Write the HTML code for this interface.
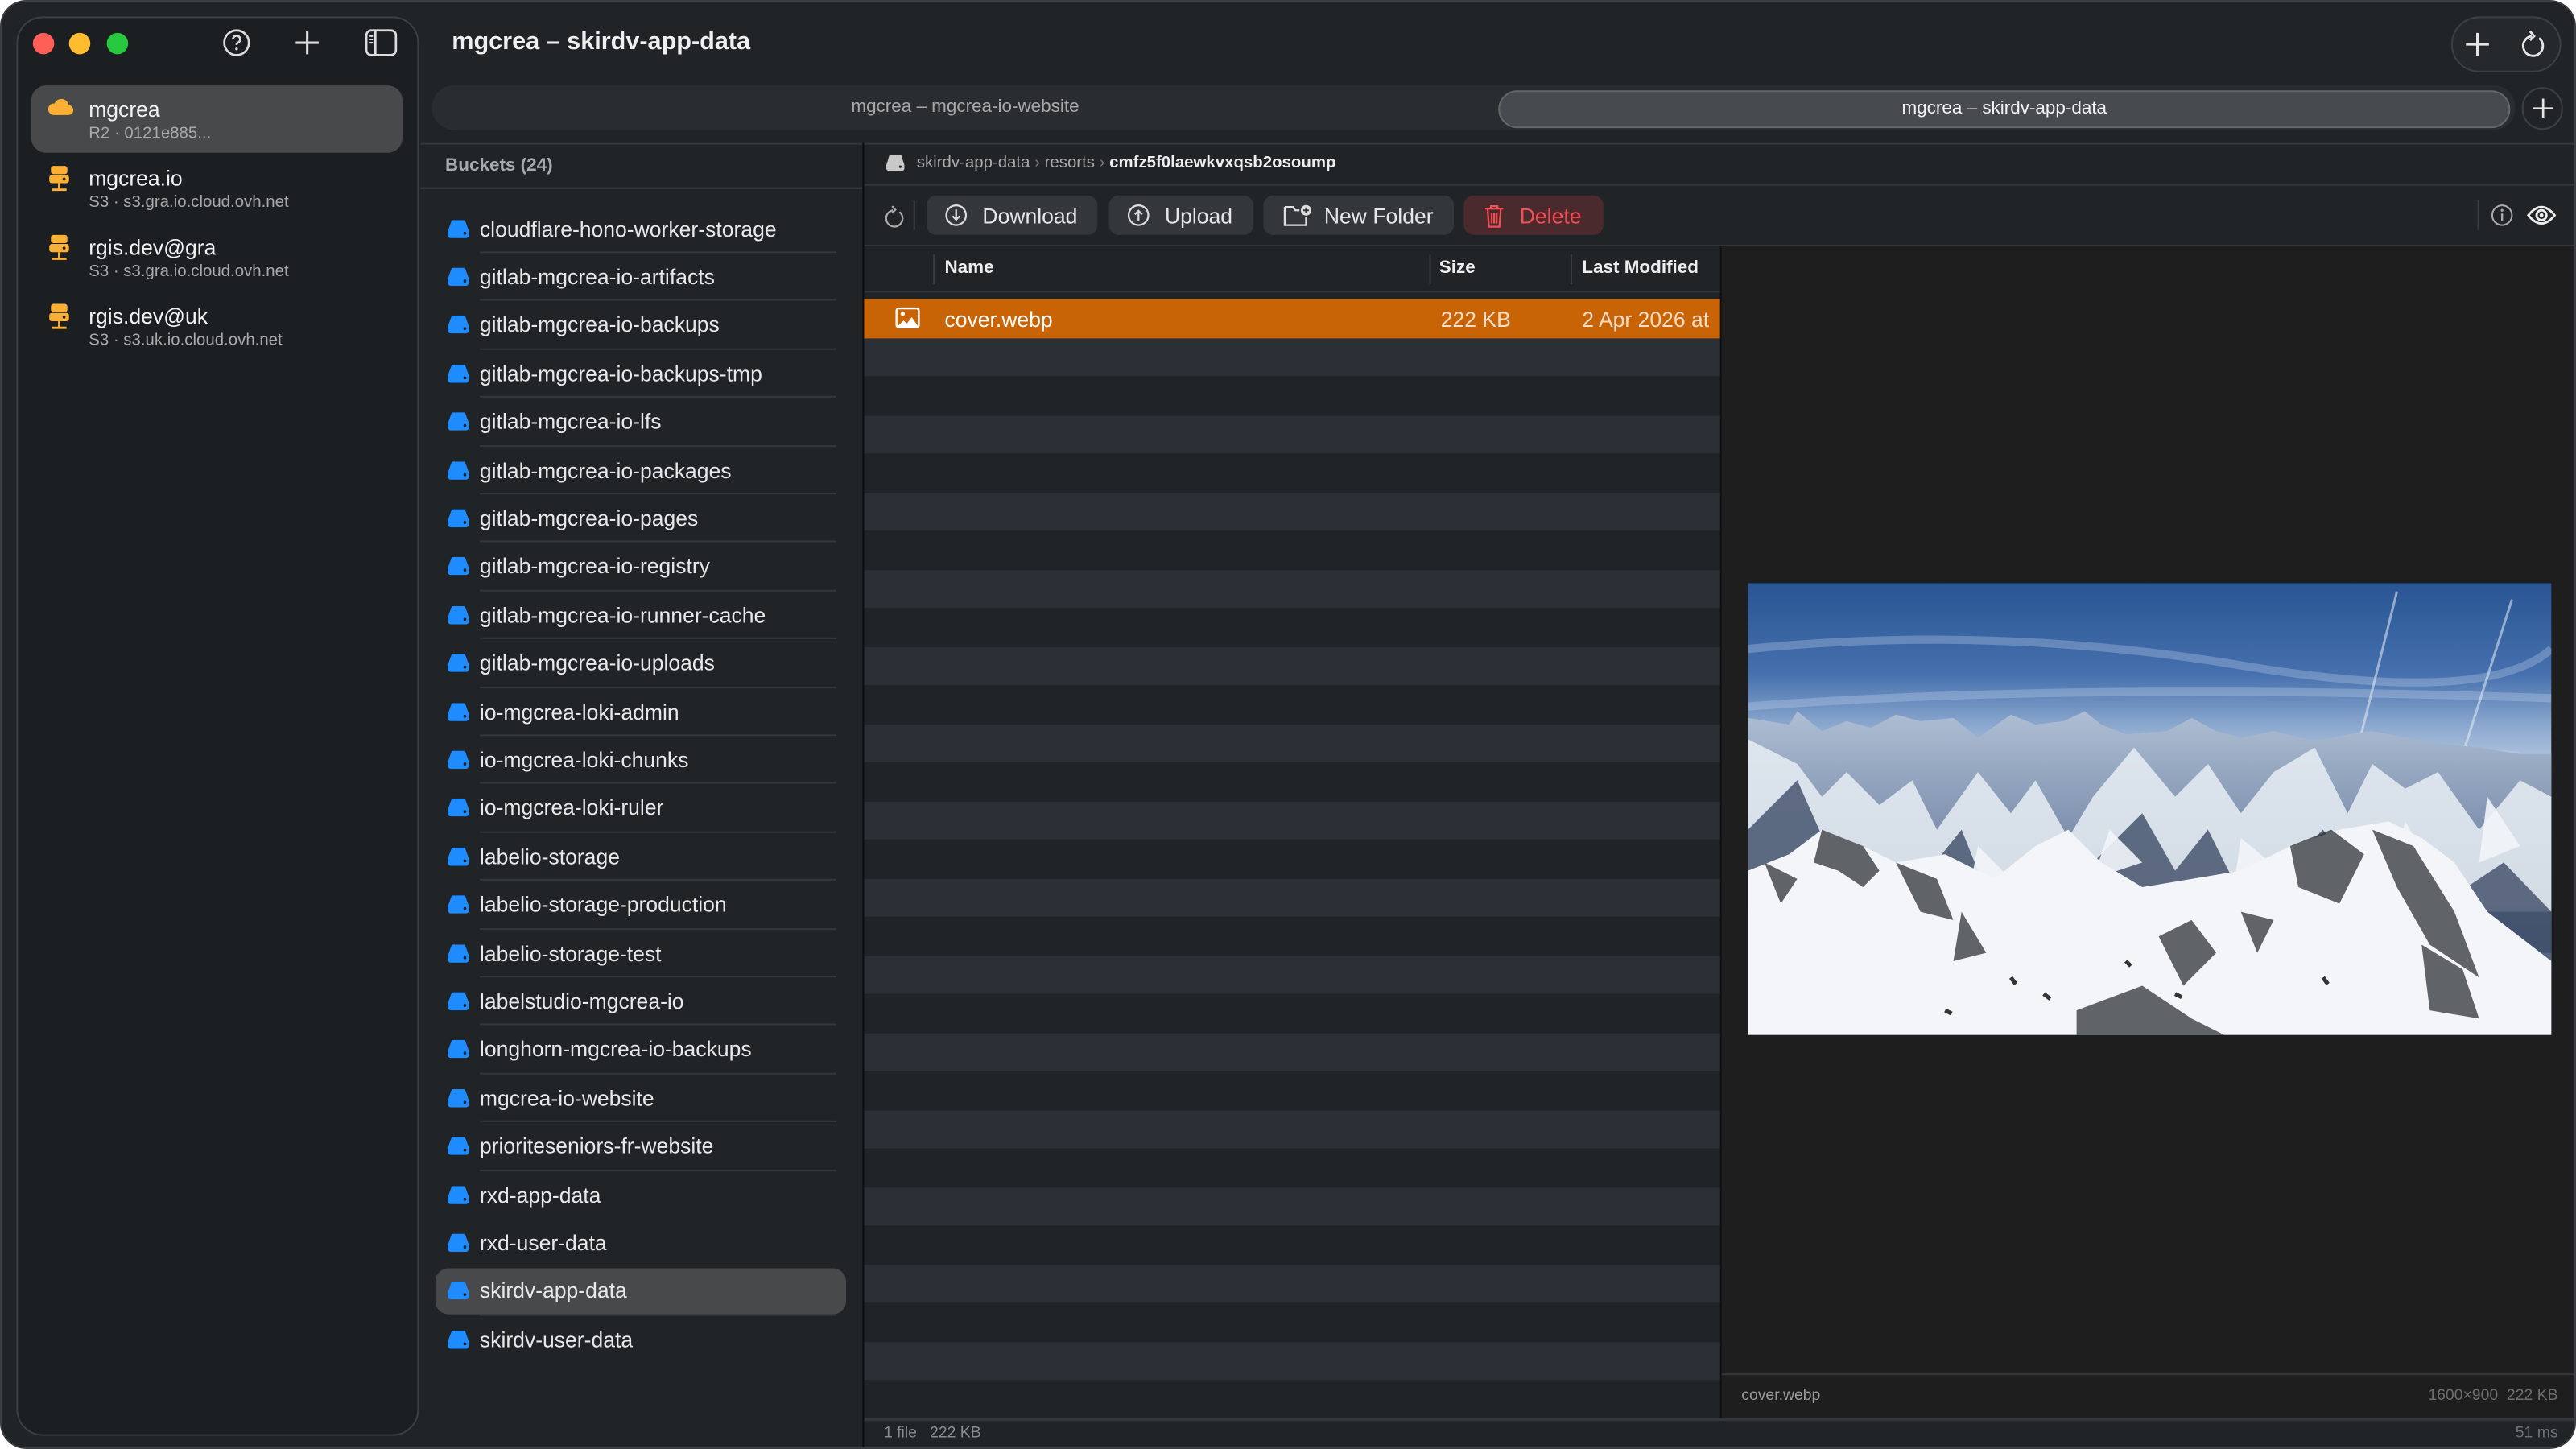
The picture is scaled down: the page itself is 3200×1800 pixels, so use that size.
<!DOCTYPE html>
<html><head><meta charset="utf-8">
<style>
*{box-sizing:border-box;margin:0;padding:0}
html,body{width:3200px;height:1800px;overflow:hidden;background:#fff}
#s{position:absolute;left:0;top:0;width:1568px;height:882px;transform:scale(2.040816);transform-origin:0 0;font-family:"Liberation Sans",sans-serif;color:#e6e6e6}
.win{position:absolute;left:0;top:0;width:1568px;height:882px;background:#202427;border-radius:16px;overflow:hidden;border:1px solid #3a3d41}
.abs{position:absolute}
.side{left:9px;top:9px;width:245px;height:864px;background:#1c1f22;border:1px solid #3b3e42;border-radius:16px}
.dot{position:absolute;width:13px;height:13px;border-radius:50%;top:19px}
.acc{position:absolute;left:18px;width:226px;height:41px}
.acc .n{position:absolute;left:35px;top:7px;font-size:13px;color:#f2f2f2}
.acc .d{position:absolute;left:35px;top:24px;font-size:10px;color:#a8a8a8}
.acc svg{position:absolute;left:10px;top:6px}
.bk{position:absolute;left:264px;width:250px;height:28px;font-size:13px;color:#e8e8e8}
.bk span{position:absolute;left:27px;top:7px}
.bk svg{position:absolute;left:7px;top:9px}
.sep{position:absolute;left:291px;width:217px;height:1px;background:#34373b}
.btn{position:absolute;top:118px;height:24px;background:#33373c;border-radius:6px;font-size:13px;color:#e6e6e6}
.btn span{position:absolute;top:5px}
.btn svg{position:absolute;top:5px}
.row{position:absolute;left:525px;width:521px;height:23.5px}
.hl{position:absolute;height:1px;background:#3a3e43}
</style></head><body><div id="s">
<div class="win">
 <div class="abs side"></div>
 <div class="dot" style="left:19px;background:#fe5f57"></div>
 <div class="dot" style="left:41px;background:#febc2e"></div>
 <div class="dot" style="left:64px;background:#28c840"></div>
 <svg class="abs" style="left:134px;top:16px" width="18" height="18" viewBox="0 0 18 18"><circle cx="9" cy="9" r="7.5" fill="none" stroke="#ddd" stroke-width="1.3"/><path d="M6.8 7a2.2 2.2 0 1 1 3 2c-.6.3-.8.7-.8 1.4" fill="none" stroke="#ddd" stroke-width="1.3"/><circle cx="9" cy="12.8" r=".8" fill="#ddd"/></svg>
 <svg class="abs" style="left:178px;top:17px" width="16" height="16"><path d="M8 1v14M1 8h14" stroke="#ddd" stroke-width="1.5"/></svg>
 <svg class="abs" style="left:221px;top:16px" width="20" height="18"><rect x="1" y="1.5" width="18" height="15" rx="3" fill="none" stroke="#ddd" stroke-width="1.3"/><path d="M6.5 2v14" stroke="#ddd" stroke-width="1.3"/><path d="M3 5h2M3 7h2M3 9h2" stroke="#ddd" stroke-width="1"/></svg>

 <div class="acc" style="top:51px;background:#48494b;border-radius:9px">
  <svg width="16" height="14" viewBox="0 0 16 14"><path d="M3.5 12h9a3 3 0 0 0 .3-6A4.5 4.5 0 0 0 4.2 5 3.5 3.5 0 0 0 3.5 12z" fill="#fbb035"/></svg>
  <div class="n">mgcrea</div><div class="d">R2 · 0121e885...</div></div>
 <div class="acc" style="top:93px"><svg width="14" height="18" viewBox="0 0 14 18"><rect x="2" y="1" width="10" height="5" rx="1.5" fill="#fbb035"/><rect x="1" y="6.5" width="12" height="5" rx="1.5" fill="#fbb035"/><circle cx="10" cy="9" r=".9" fill="#1c1f22"/><path d="M7 11.5v4M2.5 15.5h9" stroke="#fbb035" stroke-width="1.4"/></svg><div class="n">mgcrea.io</div><div class="d">S3 · s3.gra.io.cloud.ovh.net</div></div>
 <div class="acc" style="top:135px"><svg width="14" height="18" viewBox="0 0 14 18"><rect x="2" y="1" width="10" height="5" rx="1.5" fill="#fbb035"/><rect x="1" y="6.5" width="12" height="5" rx="1.5" fill="#fbb035"/><circle cx="10" cy="9" r=".9" fill="#1c1f22"/><path d="M7 11.5v4M2.5 15.5h9" stroke="#fbb035" stroke-width="1.4"/></svg><div class="n">rgis.dev@gra</div><div class="d">S3 · s3.gra.io.cloud.ovh.net</div></div>
 <div class="acc" style="top:177px"><svg width="14" height="18" viewBox="0 0 14 18"><rect x="2" y="1" width="10" height="5" rx="1.5" fill="#fbb035"/><rect x="1" y="6.5" width="12" height="5" rx="1.5" fill="#fbb035"/><circle cx="10" cy="9" r=".9" fill="#1c1f22"/><path d="M7 11.5v4M2.5 15.5h9" stroke="#fbb035" stroke-width="1.4"/></svg><div class="n">rgis.dev@uk</div><div class="d">S3 · s3.uk.io.cloud.ovh.net</div></div>

 <div class="abs" style="left:274px;top:16px;font-size:15px;font-weight:bold;color:#f0f0f0">mgcrea – skirdv-app-data</div>
 <div class="abs" style="left:1491px;top:9px;width:67px;height:34px;border:1px solid #3c4044;border-radius:17px;background:#25292c"></div>
 <svg class="abs" style="left:1499px;top:18px" width="16" height="16"><path d="M8 1v14M1 8h14" stroke="#e6e6e6" stroke-width="1.5"/></svg>
 <svg class="abs" style="left:1532px;top:16px" width="18" height="20" viewBox="0 0 18 20"><path d="M12.5 6.2A6 6 0 1 1 8 5" fill="none" stroke="#e6e6e6" stroke-width="1.4"/><path d="M7 2l2.5 3L7 7.5" fill="none" stroke="#e6e6e6" stroke-width="1.4"/></svg>

 <div class="abs" style="left:262px;top:51px;width:1268px;height:27px;background:#2a2d30;border-radius:13px"></div>
 <div class="abs" style="left:262px;top:58px;width:649px;text-align:center;font-size:11px;color:#a8a8a8">mgcrea – mgcrea-io-website</div>
 <div class="abs" style="left:911px;top:54px;width:616px;height:23px;background:#474a4e;border:1px solid #64676b;border-radius:12px;text-align:center;font-size:11px;line-height:21px;color:#f2f2f2">mgcrea – skirdv-app-data</div>
 <div class="abs" style="left:1534px;top:52px;width:25px;height:26px;border:1px solid #3c4044;border-radius:13px"></div>
 <svg class="abs" style="left:1541px;top:59px" width="12" height="12"><path d="M6 0v12M0 6h12" stroke="#e6e6e6" stroke-width="1.3"/></svg>
 <div class="hl" style="left:255px;top:86px;width:1313px;background:#34383c"></div>

 <div class="abs" style="left:270px;top:94px;font-size:11px;font-weight:bold;color:#a8abae">Buckets (24)</div>
 <div class="hl" style="left:255px;top:113px;width:269px;background:#3c4045"></div>
 <div class="bk" style="top:771px;background:#48494b;border-radius:8px"></div>
 <div id="bl"></div>
 <div class="abs" style="left:524px;top:86px;width:1px;height:796px;background:#0b0c0d"></div>

 <svg class="abs" style="left:538px;top:93px" width="12" height="10" viewBox="0 0 12 10"><path d="M2.5 0h7l1.5 5H1z" fill="#c8c8c8"/><rect x="0.5" y="5" width="11" height="5" rx="1.5" fill="#c8c8c8"/><circle cx="9" cy="7.5" r=".8" fill="#202427"/></svg>
 <div class="abs" style="left:557px;top:93px;font-size:10px;color:#aaa">skirdv-app-data <span style="color:#777">›</span> resorts <span style="color:#777">›</span> <span style="color:#eee;font-weight:bold">cmfz5f0laewkvxqsb2osoump</span></div>
 <div class="hl" style="left:525px;top:111px;width:1043px;background:#34383c"></div>

 <svg class="abs" style="left:536px;top:123px" width="14" height="16" viewBox="0 0 14 16"><path d="M10.5 5A5 5 0 1 1 6.5 4" fill="none" stroke="#aaa" stroke-width="1.1"/><path d="M6 1.5l2 2.2-2 2" fill="none" stroke="#aaa" stroke-width="1.1"/></svg>
 <div class="abs" style="left:555px;top:121px;width:1px;height:18px;background:#3a3d41"></div>
 <div class="btn" style="left:563px;width:104px"><svg style="left:11px" width="14" height="14"><circle cx="7" cy="7" r="6" fill="none" stroke="#ddd" stroke-width="1.1"/><path d="M7 3.5v6M4.8 7.5L7 9.7l2.2-2.2" fill="none" stroke="#ddd" stroke-width="1.1"/></svg><span style="left:34px">Download</span></div>
 <div class="btn" style="left:674px;width:88px"><svg style="left:11px" width="14" height="14"><circle cx="7" cy="7" r="6" fill="none" stroke="#ddd" stroke-width="1.1"/><path d="M7 10.5v-6M4.8 6.5L7 4.3l2.2 2.2" fill="none" stroke="#ddd" stroke-width="1.1"/></svg><span style="left:34px">Upload</span></div>
 <div class="btn" style="left:768px;width:116px"><svg style="left:12px" width="18" height="14" viewBox="0 0 18 14"><path d="M1 2h5l1.5 2H10M1 2v11h13V8" fill="none" stroke="#ddd" stroke-width="1.1"/><circle cx="14" cy="4" r="3.2" fill="#ddd"/><path d="M14 2.3v3.4M12.3 4h3.4" stroke="#33373c" stroke-width="1"/></svg><span style="left:37px">New Folder</span></div>
 <div class="btn" style="left:890px;width:85px;background:#4b2a2e"><svg style="left:12px" width="13" height="15" viewBox="0 0 13 15"><path d="M1 3h11M4.5 3V1.5h4V3M2.5 3l.8 11h6.4l.8-11M5 5.5v6.5M6.5 5.5v6.5M8 5.5v6.5" fill="none" stroke="#ef4f55" stroke-width="1.1"/></svg><span style="left:34px;color:#ef4f55">Delete</span></div>
 <div class="abs" style="left:1507px;top:121px;width:1px;height:18px;background:#3a3d41"></div>
 <svg class="abs" style="left:1515px;top:123px" width="14" height="14"><circle cx="7" cy="7" r="6" fill="none" stroke="#aaa" stroke-width="1"/><path d="M7 6v4.5" stroke="#aaa" stroke-width="1.2"/><circle cx="7" cy="4" r=".8" fill="#aaa"/></svg>
 <svg class="abs" style="left:1537px;top:123px" width="18" height="14" viewBox="0 0 18 14"><path d="M1 7Q9 -3 17 7Q9 17 1 7z" fill="none" stroke="#eee" stroke-width="1.4"/><circle cx="9" cy="7" r="3" fill="none" stroke="#eee" stroke-width="1.4"/><circle cx="9" cy="7" r="1.2" fill="#eee"/></svg>
 <div class="hl" style="left:525px;top:148px;width:1043px;background:#34383c"></div>

 <div class="abs" style="left:525px;top:149px;width:521px;height:713px;background:#202427"></div>
 <div class="abs" style="left:567px;top:154px;width:1px;height:18px;background:#3a3e43"></div>
 <div class="abs" style="left:869px;top:154px;width:1px;height:18px;background:#3a3e43"></div>
 <div class="abs" style="left:955px;top:154px;width:1px;height:18px;background:#3a3e43"></div>
 <div class="abs" style="left:574px;top:156px;font-size:11px;font-weight:bold;color:#eee">Name</div>
 <div class="abs" style="left:875px;top:156px;font-size:11px;font-weight:bold;color:#eee">Size</div>
 <div class="abs" style="left:962px;top:156px;font-size:11px;font-weight:bold;color:#eee">Last Modified</div>
 <div class="hl" style="left:525px;top:176px;width:521px;background:#34383c"></div>
 <div id="rows"></div>
 <div class="row" style="top:181px;background:#c86406;overflow:hidden">
  <svg class="abs" style="left:19px;top:5px" width="15" height="13" viewBox="0 0 15 13"><rect x=".7" y=".7" width="13.6" height="11.6" rx="1.5" fill="none" stroke="#fff" stroke-width="1.2"/><circle cx="4.5" cy="4" r="1.3" fill="#fff"/><path d="M1 12l4-4 2 2 3-4 4 6z" fill="#fff"/></svg>
  <div class="abs" style="left:49px;top:5px;font-size:13px;color:#fff">cover.webp</div>
  <div class="abs" style="left:351px;top:5px;font-size:13px;color:#f6dcc6">222 KB</div>
  <div class="abs" style="left:437px;top:5px;font-size:13px;color:#f6dcc6;white-space:nowrap">2 Apr 2026 at</div>
 </div>
 <div class="abs" style="left:1046px;top:149px;width:1px;height:713px;background:#0e0f10"></div>

 <div class="abs" style="left:1047px;top:149px;width:521px;height:713px;background:#1e1e1e"></div>
 <svg class="abs" style="left:1063px;top:354px" width="489" height="275" viewBox="0 0 489 275">
  <defs><linearGradient id="sk" x1="0" y1="0" x2="0" y2="1"><stop offset="0" stop-color="#2a5594"/><stop offset=".2" stop-color="#4570ad"/><stop offset=".32" stop-color="#8eaad0"/><stop offset=".4" stop-color="#b3c6df"/></linearGradient>
  <linearGradient id="mt" x1="0" y1="0" x2="0" y2="1"><stop offset="0" stop-color="#aebfd4"/><stop offset=".5" stop-color="#6d80a0"/><stop offset="1" stop-color="#3a4a66"/></linearGradient></defs>
  <rect width="489" height="275" fill="url(#sk)"/>
  <path d="M0 40Q150 25 300 50T489 40M0 75Q200 60 489 70M30 100Q250 90 470 105" stroke="#c9d8ee" stroke-width="5" opacity=".3" fill="none"/>
  <path d="M395 5L370 105M465 10L430 120" stroke="#e6eef8" stroke-width="1.5" opacity=".55"/>
  <path d="M0 82L25 86 30 78 45 90 60 84 75 88 90 80 105 84 125 82 140 94 160 80 175 86 192 84 205 78 215 86 230 92 255 90 270 82 285 90 300 94 320 90 345 96 365 92 380 90 400 94 425 98 445 100 470 104 489 104V275H0z" fill="url(#mt)"/>
  <path d="M0 95L30 110 45 130 60 115 80 135 100 120 115 150 140 115 160 140 175 120 195 155 210 130 235 100 260 130 280 110 300 140 320 115 345 100 365 140 380 110 400 125 420 115 445 150 470 120 489 130V200H0z" fill="#e8edf3" opacity=".85"/>
  <path d="M0 150L30 120 50 165 80 190 110 175 130 150 150 200 180 160 210 170 240 140 260 175 280 150 300 190 330 170 350 150 370 180 400 160 430 190 460 170 489 200V225H0z" fill="#3d4c66" opacity=".8"/>
  <path d="M50 180L80 200 90 215 60 210zM140 160l30 30-40 20zM220 150l20 20-30 10zM300 155l30 25-35 10zM400 145l20 35-30 5zM450 130l20 30-25 10z" fill="#f2f5f9" opacity=".9"/>
  <path d="M0 175L25 165 45 150 70 160 90 170 120 165 150 180 175 160 195 150 215 170 240 185 270 180 300 175 330 160 360 150 390 145 410 155 430 170 450 200 489 230V275H0z" fill="#f3f5f8"/>
  <path d="M45 150L70 160 80 175 70 185 55 175 40 170zM10 170l20 10-10 15zM90 170l25 10 10 25-20-5zM130 200l15 25-20 5zM250 215l20-10 15 20-20 20zM330 160l25-10 20 15-15 30-25-10zM380 150l25 10 25 40 15 40-30-20-20-35zM300 200l20 5-10 20zM200 260l40-15 30 20 20 10h-90zM410 220l25 15 10 30-30-5z" fill="#2f3238" opacity=".75"/>
  <path d="M160 240l3 4M180 250l4 3M230 230l3 3M260 250l4 2M350 240l3 4M120 260l4 2" stroke="#333" stroke-width="2.5"/>
 </svg>
 <div class="hl" style="left:1047px;top:835px;width:521px;background:#34373b"></div>
 <div class="abs" style="left:1059px;top:843px;font-size:9.5px;color:#9a9a9a">cover.webp</div>
 <div class="abs" style="left:1400px;top:843px;width:156px;text-align:right;font-size:9.5px;color:#6f6f6f">1600×900 &nbsp;222 KB</div>

 <div class="hl" style="left:525px;top:862px;width:1043px;height:1.5px;background:#33373c"></div>
 <div class="abs" style="left:537px;top:866px;font-size:9.5px;color:#8a8d90">1 file &nbsp;&nbsp;222 KB</div>
 <div class="abs" style="left:1500px;top:866px;width:56px;text-align:right;font-size:9.5px;color:#6f7275">51 ms</div>
</div>
</div>
<script>
var names=["cloudflare-hono-worker-storage","gitlab-mgcrea-io-artifacts","gitlab-mgcrea-io-backups","gitlab-mgcrea-io-backups-tmp","gitlab-mgcrea-io-lfs","gitlab-mgcrea-io-packages","gitlab-mgcrea-io-pages","gitlab-mgcrea-io-registry","gitlab-mgcrea-io-runner-cache","gitlab-mgcrea-io-uploads","io-mgcrea-loki-admin","io-mgcrea-loki-chunks","io-mgcrea-loki-ruler","labelio-storage","labelio-storage-production","labelio-storage-test","labelstudio-mgcrea-io","longhorn-mgcrea-io-backups","mgcrea-io-website","prioriteseniors-fr-website","rxd-app-data","rxd-user-data","skirdv-app-data","skirdv-user-data"];
var h="",ic='<svg width="14" height="11" viewBox="0 0 14 11"><path d="M3 0h8l2 5.5H1z" fill="#1e8cff"/><rect x="0.5" y="5" width="13" height="6" rx="2" fill="#1e8cff"/><circle cx="11" cy="8" r=".9" fill="#202427"/></svg>';
for(var i=0;i<names.length;i++){var y=123.5+i*29.4;h+='<div class="bk" style="top:'+y+'px">'+ic+'<span>'+names[i]+'</span></div>';if(i<names.length-1&&i!=20&&i!=21)h+='<div class="sep" style="top:'+(y+28.5)+'px"></div>';}
document.getElementById('bl').outerHTML=h;
var r="";for(var j=1;j<29;j++){var t=181+j*23.5;r+='<div class="row" style="top:'+t+'px;background:'+(j%2?'#2b2f36':'#202427')+'"></div>';}
document.getElementById('rows').outerHTML=r;
</script>
</body></html>
